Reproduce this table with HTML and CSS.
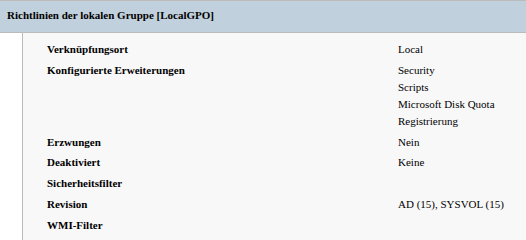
FILE: index.html
```html
<!DOCTYPE html>
<html lang="de">
<head>
<meta charset="utf-8">
<title>Richtlinien der lokalen Gruppe</title>
<link rel="stylesheet" href="styles.css">
</head>
<body>
<div class="section">
  <div class="section-header">Richtlinien der lokalen Gruppe [LocalGPO]</div>
  <div class="section-body">
    <table class="info">
      <tr><th>Verknüpfungsort</th><td>Local</td></tr>
      <tr><th>Konfigurierte Erweiterungen</th><td><div>Security</div><div>Scripts</div><div>Microsoft Disk Quota</div><div>Registrierung</div></td></tr>
      <tr><th>Erzwungen</th><td>Nein</td></tr>
      <tr><th>Deaktiviert</th><td>Keine</td></tr>
      <tr><th>Sicherheitsfilter</th><td></td></tr>
      <tr><th>Revision</th><td>AD (15), SYSVOL (15)</td></tr>
      <tr><th>WMI-Filter</th><td></td></tr>
    </table>
  </div>
</div>
</body>
</html>
```
FILE: styles.css
```css
html, body {
  margin: 0;
  padding: 0;
  background: #ffffff;
  color: #000000;
  font-family: "Liberation Serif", "Times New Roman", serif;
  font-size: 11px;
}

.section-header {
  height: 31px;
  box-sizing: content-box;
  background: #c0d0dc;
  border-top: 1px solid #bbbbbb;
  border-bottom: 1px solid #bbbbbb;
  font-weight: bold;
  padding-left: 7px;
  line-height: 29px;
}

.section-body {
  margin-left: 22px;
  border-left: 1px solid #bbbbbb;
  background: #f8f8f8;
  padding: 6px 0 6px 24px;
}

.info {
  border-collapse: collapse;
  width: 100%;
  table-layout: fixed;
}

.info th,
.info td {
  text-align: left;
  vertical-align: top;
  padding: 2px 0 1.8px 0;
  line-height: 17px;
}

.info th {
  width: 351px;
  font-weight: bold;
}
```
